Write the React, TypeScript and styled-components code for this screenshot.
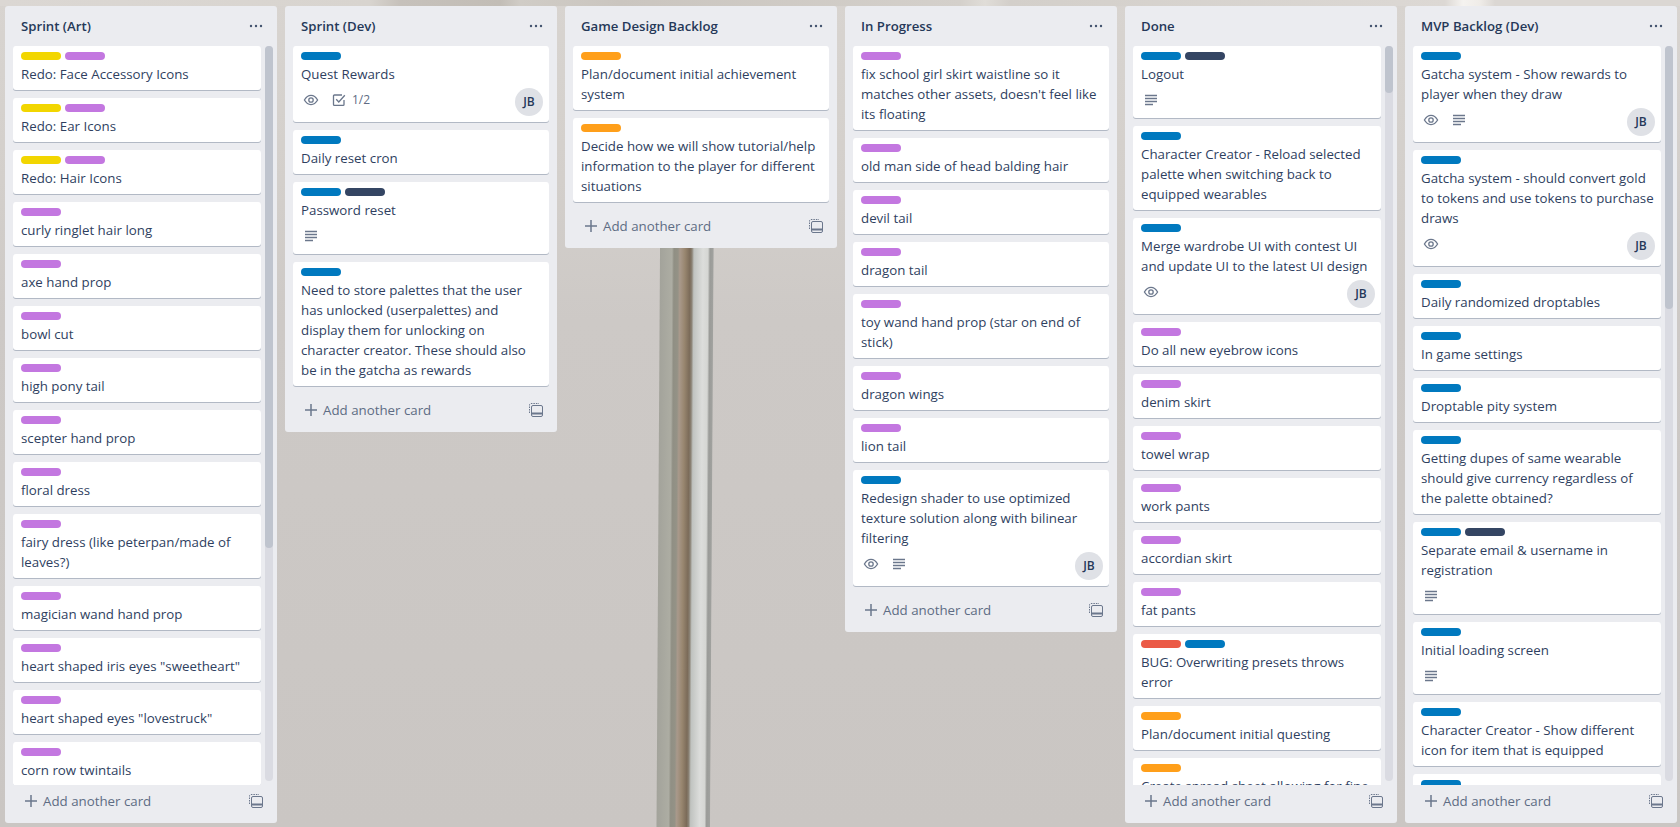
import React from 'react'
import styled, { createGlobalStyle } from 'styled-components'

const GlobalStyle = createGlobalStyle`
  html, body, #root {
    margin: 0;
    height: 100%;
  }
  body {
    font-family: "Open Sans", "Liberation Sans", sans-serif;
    font-size: 13.3px;
    line-height: 20px;
    color: #172b4d;
    overflow: hidden;
  }
`

const labelColors = {
  yellow: '#f2d600',
  purple: '#c377e0',
  blue: '#0079bf',
  dark: '#344563',
  orange: '#ff9f1a',
  red: '#eb5a46',
}

type LabelColor = keyof typeof labelColors

const Board = styled.div`
  position: relative;
  display: flex;
  align-items: flex-start;
  gap: 8px;
  height: 100vh;
  box-sizing: border-box;
  padding: 6px 3px 4px 5px;
  overflow: hidden;
  background:
    linear-gradient(
        90deg,
        #dbd7d3 0,
        #d8d4cf 370px,
        #c6c1bb 400px,
        #c2bdb6 500px,
        #d0ccc6 520px,
        #cac5bf 620px,
        #d4d0cb 960px,
        #e0ddd8 985px,
        #d3cfca 1010px,
        #dcd8d4 1445px,
        #f5f3f0 1463px,
        #efece8 1480px,
        #dbd7d3 1495px
      )
      0 0 / 100% 6px no-repeat,
    linear-gradient(180deg, #d8d4d0 0, #d3cfcb 180px, #cdc9c6 320px, #cac6c3 100%);

  &::before {
    content: '';
    position: absolute;
    top: 6px;
    bottom: 0;
    left: 660px;
    width: 54px;
    transform: skewX(-0.35deg);
    transform-origin: 0 248px;
    background: linear-gradient(
      90deg,
      #a3a39b 0,
      #adada3 12px,
      #908f84 14px,
      #949286 18px,
      #a9998b 20px,
      #98866f 25px,
      #7b6b59 30px,
      #8a8275 32px,
      #c0c3c0 34px,
      #dcdddb 43px,
      #d5d6d3 48px,
      #9a9b98 50px,
      #a0a19e 53px,
      #cbc7c4 54px
    );
  }
`

const ListColumn = styled.section`
  position: relative;
  display: flex;
  flex-direction: column;
  flex: 0 0 272px;
  max-height: 100%;
  background: #ebecf0;
  border-radius: 3px;
`

const ListHeader = styled.header`
  display: flex;
  align-items: center;
  justify-content: space-between;
  flex: none;
  height: 40px;
  padding: 0 14px 0 16px;
`

const ListTitle = styled.h2`
  margin: 0;
  font-size: 13.2px;
  line-height: 20px;
  font-weight: 600;
  color: #253858;
`

const MoreIcon = styled.svg`
  width: 14px;
  height: 14px;
  fill: #42526e;
`

const CardList = styled.div<{ $scrolling: boolean }>`
  flex: 1 1 auto;
  min-height: 0;
  margin: 0 4px 0 8px;
  padding-right: ${(p) => (p.$scrolling ? 12 : 4)}px;
  overflow: hidden;
`

// the browser hides native scrollbars in the shot, so the bar is drawn over the list
const ScrollTrack = styled.div`
  position: absolute;
  top: 40px;
  right: 4px;
  bottom: 42px;
  width: 8px;
  border-radius: 4px;
  background: #dadbe2;
`

const ScrollThumb = styled.div<{ $height: number }>`
  height: ${(p) => p.$height}px;
  border-radius: 4px;
  background: #bfc4ce;
`

const Card = styled.article`
  margin-bottom: 8px;
  padding: 6px 6px 0 8px;
  background: #fff;
  border-radius: 3px;
  box-shadow: 0 1px 0 rgba(9, 30, 66, 0.25);
`

const Labels = styled.div`
  display: flex;
  gap: 4px;
  margin-bottom: 4px;
`

const Label = styled.span<{ $color: LabelColor }>`
  width: 40px;
  height: 8px;
  border-radius: 4px;
  background: ${(p) => labelColors[p.$color]};
`

const Title = styled.div`
  font-size: 13.3px;
  line-height: 20px;
  color: #2f3f5f;

  &:last-child {
    padding-bottom: 6px;
  }
`

const CardFooter = styled.div`
  display: flex;
  justify-content: space-between;
  align-items: flex-start;
`

const Badges = styled.div`
  display: flex;
  gap: 8px;
  height: 20px;
  margin: 6px 0 8px;
`

const Badge = styled.span`
  display: flex;
  align-items: center;
  color: #5e6c84;
  font-size: 12px;
  line-height: 20px;
`

const BadgeIcon = styled.svg`
  width: 20px;
  height: 20px;
  padding: 2px;
  box-sizing: border-box;
  fill: none;
  stroke: #6b778c;
  stroke-width: 1.3;
`

const BadgeText = styled.span`
  margin-left: 3px;
`

const Avatar = styled.span`
  display: flex;
  align-items: center;
  justify-content: center;
  width: 28px;
  height: 28px;
  margin: 4px 0 6px;
  border-radius: 50%;
  background: #dfe1e6;
  color: #253858;
  font-size: 12px;
  font-weight: 600;
`

const AddRow = styled.footer`
  display: flex;
  align-items: center;
  flex: none;
  height: 24px;
  margin: 4px 14px 10px 20px;
  color: #5e6c84;
`

const AddIcon = styled.svg`
  width: 12px;
  height: 12px;
  margin-right: 6px;
  stroke: #6b778c;
  stroke-width: 1.5;
  fill: none;
`

const AddText = styled.span`
  flex: 1;
  font-size: 13.3px;
`

const TemplateIcon = styled.svg`
  width: 14px;
  height: 14px;
  fill: none;
  stroke: #6b778c;
`

const Eye = () => (
  <BadgeIcon viewBox="0 0 16 16">
    <path d="M1.4 8C3.2 4.9 5.3 3.4 8 3.4s4.8 1.5 6.6 4.6c-1.8 3.1-3.9 4.6-6.6 4.6S3.2 11.100 1.400 8z" />
    <circle cx="8" cy="8" r="2.2" />
  </BadgeIcon>
)

const Description = () => (
  <BadgeIcon viewBox="0 0 16 16">
    <path d="M2 3.500h12M2 6.500h12M2 9.500h12M2 12.500h8" />
  </BadgeIcon>
)

const Checklist = () => (
  <BadgeIcon viewBox="0 0 16 16">
    <path d="M13 8v4.500a.9.900 0 0 1-.9.900H3.400a.9.900 0 0 1-.9-.9V3.900a.9.900 0 0 1 .9-.9h7.600" />
    <path d="M5.200 7.200L7.800 10l6-6.800" />
  </BadgeIcon>
)

const More = () => (
  <MoreIcon viewBox="0 0 14 14">
    <circle cx="2" cy="7" r="1.200" />
    <circle cx="7" cy="7" r="1.200" />
    <circle cx="12" cy="7" r="1.200" />
  </MoreIcon>
)

const Plus = () => (
  <AddIcon viewBox="0 0 12 12">
    <path d="M6 0v12M0 6h12" />
  </AddIcon>
)

const Template = () => (
  <TemplateIcon viewBox="0 0 14 14">
    <path d="M.5 10V2A1.500 1.500 0 0 1 2 .5h8" strokeDasharray="1.500 1" />
    <rect x="2.500" y="2.500" width="11" height="11" rx="1.500" />
    <path d="M3 10.500h10" strokeWidth="2" />
  </TemplateIcon>
)

type CardData = {
  title: string
  labels: LabelColor[]
  watch?: boolean
  description?: boolean
  checklist?: string
  member?: string
}

type ListData = {
  title: string
  cards: CardData[]
  thumb?: number
}

const simple = (labels: LabelColor[], titles: string[]): CardData[] =>
  titles.map((title) => ({ title, labels }))

const lists: ListData[] = [
  {
    title: 'Sprint (Art)',
    thumb: 502,
    cards: [
      ...simple(['yellow', 'purple'], ['Redo: Face Accessory Icons', 'Redo: Ear Icons', 'Redo: Hair Icons']),
      ...simple(['purple'], [
        'curly ringlet hair long',
        'axe hand prop',
        'bowl cut',
        'high pony tail',
        'scepter hand prop',
        'floral dress',
        'fairy dress (like peterpan/made of leaves?)',
        'magician wand hand prop',
        'heart shaped iris eyes "sweetheart"',
        'heart shaped eyes "lovestruck"',
        'corn row twintails',
      ]),
    ],
  },
  {
    title: 'Sprint (Dev)',
    cards: [
      { title: 'Quest Rewards', labels: ['blue'], watch: true, checklist: '1/2', member: 'JB' },
      { title: 'Daily reset cron', labels: ['blue'] },
      { title: 'Password reset', labels: ['blue', 'dark'], description: true },
      {
        title:
          'Need to store palettes that the user has unlocked (userpalettes) and display them for unlocking on character creator. These should also be in the gatcha as rewards',
        labels: ['blue'],
      },
    ],
  },
  {
    title: 'Game Design Backlog',
    cards: simple(['orange'], [
      'Plan/document initial achievement system',
      'Decide how we will show tutorial/help information to the player for different situations',
    ]),
  },
  {
    title: 'In Progress',
    cards: [
      ...simple(['purple'], [
        "fix school girl skirt waistline so it matches other assets, doesn't feel like its floating",
        'old man side of head balding hair',
        'devil tail',
        'dragon tail',
        'toy wand hand prop (star on end of stick)',
        'dragon wings',
        'lion tail',
      ]),
      {
        title: 'Redesign shader to use optimized texture solution along with bilinear filtering',
        labels: ['blue'],
        watch: true,
        description: true,
        member: 'JB',
      },
    ],
  },
  {
    title: 'Done',
    thumb: 47,
    cards: [
      { title: 'Logout', labels: ['blue', 'dark'], description: true },
      {
        title: 'Character Creator - Reload selected palette when switching back to equipped wearables',
        labels: ['blue'],
      },
      {
        title: 'Merge wardrobe UI with contest UI and update UI to the latest UI design',
        labels: ['blue'],
        watch: true,
        member: 'JB',
      },
      ...simple(['purple'], [
        'Do all new eyebrow icons',
        'denim skirt',
        'towel wrap',
        'work pants',
        'accordian skirt',
        'fat pants',
      ]),
      { title: 'BUG: Overwriting presets throws error', labels: ['red', 'blue'] },
      ...simple(['orange'], ['Plan/document initial questing', 'Create spread sheet allowing for fine']),
    ],
  },
  {
    title: 'MVP Backlog (Dev)',
    thumb: 263,
    cards: [
      {
        title: 'Gatcha system - Show rewards to player when they draw',
        labels: ['blue'],
        watch: true,
        description: true,
        member: 'JB',
      },
      {
        title: 'Gatcha system - should convert gold to tokens and use tokens to purchase draws',
        labels: ['blue'],
        watch: true,
        member: 'JB',
      },
      ...simple(['blue'], [
        'Daily randomized droptables',
        'In game settings',
        'Droptable pity system',
        'Getting dupes of same wearable should give currency regardless of the palette obtained?',
      ]),
      { title: 'Separate email & username in registration', labels: ['blue', 'dark'], description: true },
      { title: 'Initial loading screen', labels: ['blue'], description: true },
      ...simple(['blue'], ['Character Creator - Show different icon for item that is equipped', '']),
    ],
  },
]

const TaskCard = ({ card }: { card: CardData }) => {
  const hasFooter = card.watch || card.description || card.checklist || card.member
  return (
    <Card>
      <Labels>
        {card.labels.map((color) => (
          <Label key={color} $color={color} />
        ))}
      </Labels>
      <Title>{card.title}</Title>
      {hasFooter && (
        <CardFooter>
          <Badges>
            {card.watch && (
              <Badge>
                <Eye />
              </Badge>
            )}
            {card.description && (
              <Badge>
                <Description />
              </Badge>
            )}
            {card.checklist && (
              <Badge>
                <Checklist />
                <BadgeText>{card.checklist}</BadgeText>
              </Badge>
            )}
          </Badges>
          {card.member && <Avatar>{card.member}</Avatar>}
        </CardFooter>
      )}
    </Card>
  )
}

const App = () => (
  <>
    <GlobalStyle />
    <Board>
      {lists.map((list) => (
        <ListColumn key={list.title}>
          <ListHeader>
            <ListTitle>{list.title}</ListTitle>
            <More />
          </ListHeader>
          <CardList $scrolling={!!list.thumb}>
            {list.cards.map((card) => (
              <TaskCard key={card.title} card={card} />
            ))}
          </CardList>
          {list.thumb && (
            <ScrollTrack>
              <ScrollThumb $height={list.thumb} />
            </ScrollTrack>
          )}
          <AddRow>
            <Plus />
            <AddText>Add another card</AddText>
            <Template />
          </AddRow>
        </ListColumn>
      ))}
    </Board>
  </>
)

export default App
